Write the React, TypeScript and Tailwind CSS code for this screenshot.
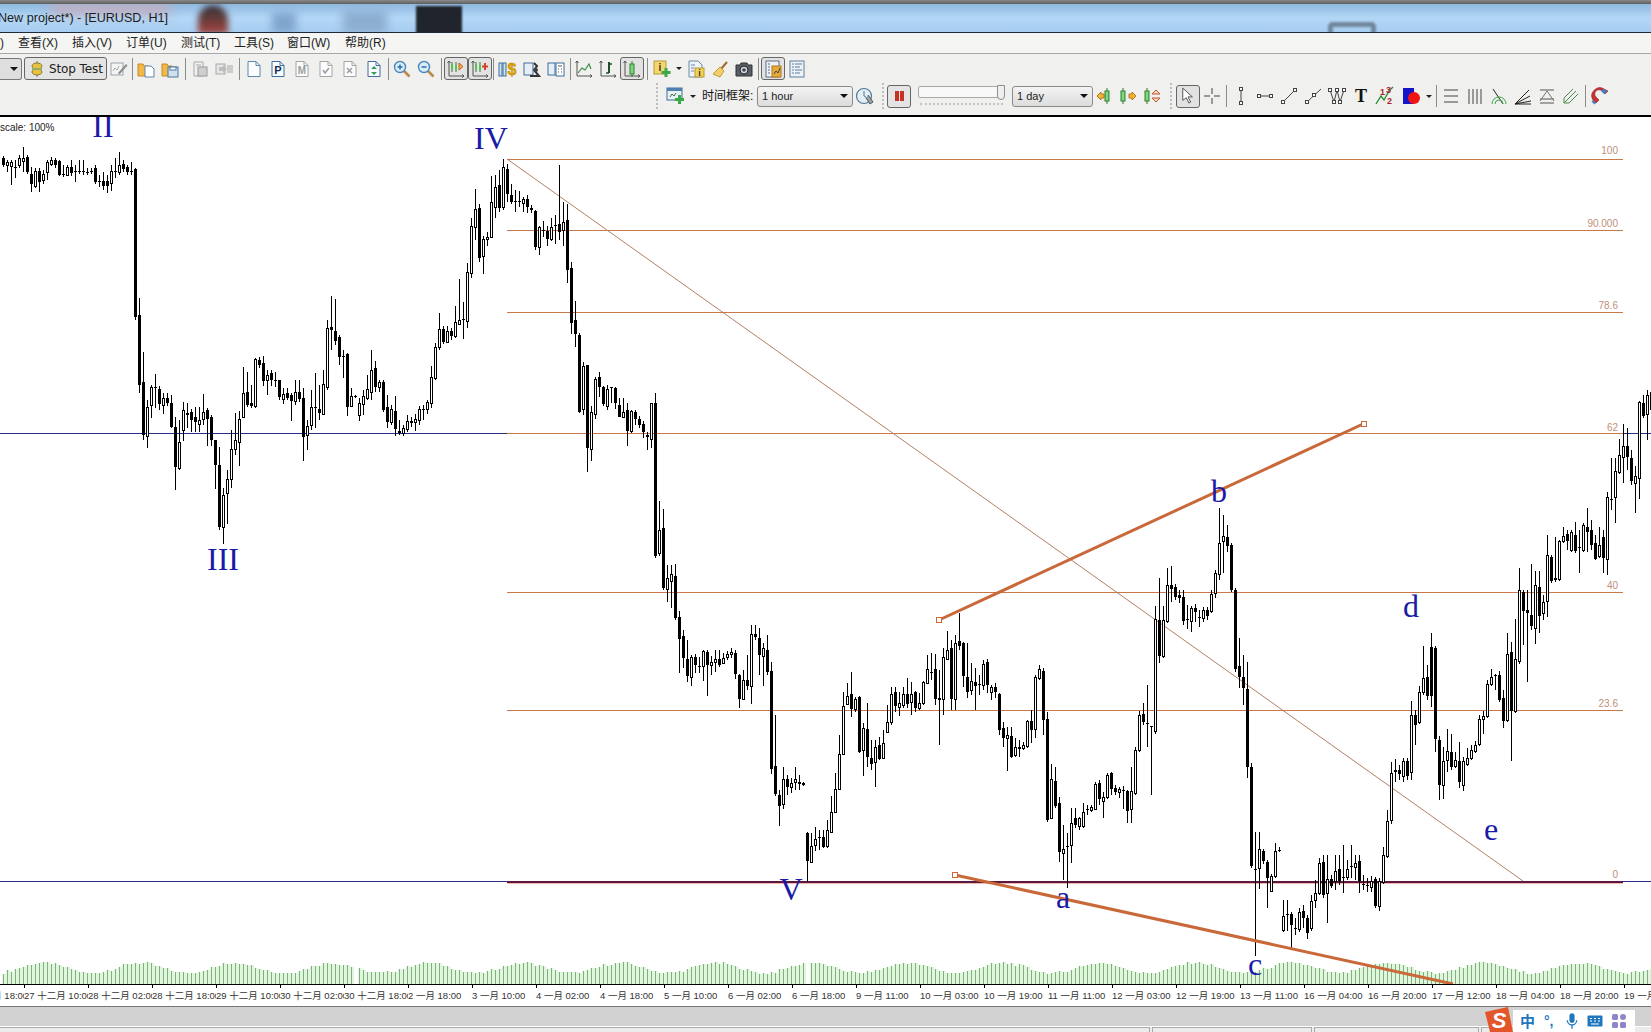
import { ReactNode } from 'react';

// y values are page pixels: body top-bottom, then wick top-bottom
const candleData = `k158-165:156-167 w162-165:160-172 w162-166:160-185 k167-168:160-178 w158-165:155-168 w158-161:147-172 k157-172:155-174 k174-184:167-192 w171-186:168-188 k171-182:168-192
w174-180:170-184 w162-172:160-180 w160-164:157-166 k160-165:158-168 k161-175:160-176 k174-175:165-177 w167-175:165-176 k167-173:160-176 k171-172:165-182 k171-172:160-174
k171-172:160-175 k172-173:168-175 k171-172:168-174 k168-182:165-184 k181-182:175-187 k181-186:172-190 k181-186:175-193 w171-183:165-191 k171-172:158-178 w165-172:152-175
k164-169:160-172 k167-172:165-175 k171-172:162-175 k169-317:168-320 k315-385:298-393 k382-435:352-440 w407-436:400-448 w387-405:385-418 k387-388:374-408 k389-404:386-410
w398-405:393-414 k398-403:393-406 k403-427:395-428 k427-467:417-490 w442-468:420-470 w410-430:402-441 k413-415:403-428 k412-420:409-432 k417-422:407-432 w420-424:407-432
w412-419:394-425 k410-419:408-446 k417-440:415-446 k440-465:440-489 k465-527:447-530 w495-527:488-544 w479-493:470-524 w449-479:430-488 w440-449:413-455 w419-442:411-466
w393-417:367-417 k392-405:372-407 k403-406:385-408 w359-406:358-408 k360-365:357-368 k363-381:356-386 w375-380:370-395 k373-380:370-386 k380-381:372-387 k380-397:381-400
w394-399:388-404 k393-398:388-400 k395-401:393-421 w392-401:380-405 k392-399:380-402 k398-437:388-461 w426-435:420-450 w407-425:390-430 k407-408:373-428 k409-413:385-420
w384-414:370-415 w328-387:320-390 k327-330:296-350 k331-341:299-345 k337-357:335-365 k356-357:350-378 k354-407:353-416 w396-406:388-407 k396-397:395-398 w403-415:398-421
w396-404:390-415 w389-398:375-400 w370-392:350-400 k368-387:361-392 w382-387:380-392 k382-410:380-412 k407-422:395-428 w409-422:405-425 k411-429:396-436 k431-433:420-435
w428-433:425-436 w421-429:415-432 k421-423:417-427 w419-422:414-431 w409-420:406-425 k409-410:405-420 w402-409:400-414 w377-403:366-408 w347-378:343-380 w329-347:313-350
k329-342:326-344 w331-342:326-343 k331-336:328-340 w322-336:306-338 w320-324:279-325 k319-320:302-339 w272-321:263-328 w226-273:218-278 w209-227:189-240 k208-258:204-262
w239-256:236-274 w237-239:232-246 w202-237:176-238 w187-207:175-218 k185-208:170-212 w167-207:159-210 k169-194:164-202
k195-202:184-204 k201-202:190-212 k201-202:191-207 w199-203:197-212 k199-207:195-213 k208-210:205-213 k211-247:210-250 w227-247:226-255 k230-231:221-237 k231-239:226-246
w227-239:218-241 k225-226:215-244 k224-232:165-240 w222-230:202-246 k220-270:204-283 k268-323:262-334 k320-334:301-347 k335-412:333-413 w366-409:362-415 k365-448:365-472
w412-449:406-461 w379-414:377-419 k377-387:372-397 k387-404:386-406 w389-406:385-410 k387-388:387-403 k388-403:387-409 k405-417:398-417 w412-417:398-418 k410-431:403-446
w411-431:410-433 k412-419:410-425 k419-425:416-428 k424-432:421-438 k435-437:432-450 w403-439:403-448 k403-556:393-558 w530-553:501-556 k528-588:509-590
w578-589:565-602 w574-581:565-608 k576-618:564-620 k617-639:611-673 k636-658:630-668 k659-676:640-682 w657-677:655-686 k657-665:654-673 k666-667:657-673 w651-666:650-681
k652-665:650-696 w662-665:656-675 w659-662:650-672 k659-665:650-667 w658-663:653-664 w654-657:651-660 w652-654:648-658 k653-674:650-679 k675-699:674-708 w680-699:670-700
k680-686:655-690 w634-686:625-704 k634-637:625-640 k638-655:628-675 w648-656:643-686 k650-672:635-675 k671-769:662-774 k766-794:715-796 k795-806:790-826 w779-804:767-809
k779-787:775-795 w783-787:778-793 w779-782:767-790 k782-784:775-790 k783-785:782-786 k833-861:832-882 w846-862:833-863 w839-845:827-851 k837-838:830-850 k837-847:830-848
w830-846:820-848 w812-832:796-833 w789-812:773-813 w754-789:735-790 w706-754:692-755 w696-704:683-705 k694-709:672-717 w699-709:697-712 k697-752:696-753 w728-750:723-776
k729-757:703-767 k758-764:740-770 w747-762:740-787 k745-759:737-760 w743-758:730-759 w722-732:705-733 w694-722:687-725 k692-706:687-712 w703-707:692-716 w694-705:687-708
k694-704:678-708 w694-702:682-715 k692-708:691-712 w703-708:693-710 w682-703:681-705 w669-683:655-684 k672-673:653-680 k669-699:654-705 k698-700:670-745 w657-699:648-715
w650-659:631-660 k648-699:640-710 w643-699:635-710 k641-646:613-650 k643-676:642-687 k677-692:643-698 w681-690:663-695 k682-686:668-710 k684-685:675-695 w664-685:660-690
k662-685:659-693 w687-692:685-700 k687-692:683-698 k694-730:693-735 k728-738:722-747 w735-738:727-771 k736-757:727-758 w747-755:738-757 k747-749:740-757 w745-748:742-750
w721-746:720-748 k721-730:710-743 w677-729:675-738 w669-678:665-680 k671-720:668-735 k719-820:712-822 w779-818:764-819 k781-806:767-808 k803-852:797-862 w849-853:825-880
k846-847:833-888 w823-845:808-863 k818-825:808-828 w818-826:817-830 w812-826:803-828 k809-810:805-815 w807-810:805-812
w784-809:782-810 k783-799:780-805 w797-801:792-818 w775-797:773-799 k773-789:772-795 k788-792:785-795 w789-792:787-798 k790-791:786-809 k791-811:790-823 w791-809:767-823
w750-793:747-795 w715-750:711-752 k714-722:703-725 k723-724:685-747 k726-727:726-795 w619-731:606-734 k620-656:578-663 w620-656:606-658 w585-621:568-623 k585-589:566-602
k587-597:584-600 k595-598:590-603 k597-621:590-625 k619-620:605-629 w608-621:606-632 k608-612:604-622 k617-618:610-627 w610-618:607-622 k610-616:607-620 w594-611:590-613
w573-593:570-598 w543-574:508-580 w536-541:515-573 k537-546:525-552 k545-590:543-592 k590-669:588-672 k666-677:638-688 k677-688:655-705 k689-767:662-778 k767-866:763-868
k869-870:832-956 w849-868:832-889 k851-861:849-864 k862-878:860-908 w876-891:874-892 w851-876:843-878 k850-851:847-852 w916-930:900-932 k914-915:900-931 k914-925:912-948
k928-929:918-935 w912-929:908-932 k911-918:905-928 k918-933:915-939 w901-928:895-931 w893-900:880-908 w863-893:858-895 k862-895:855-898 w879-893:855-923 k879-886:875-888
w871-881:855-890 k869-881:855-885 k877-878:845-893 w869-877:860-880 k866-867:845-878 w863-867:855-880 k861-881:855-893 k884-885:875-890 k885-886:878-892 w881-887:876-892
k879-906:877-908 w881-906:878-911 w855-882:847-884 w821-856:810-858 w773-820:762-824 k770-772:759-782 k770-774:765-780 w761-776:758-782 k761-776:758-780 w715-772:701-780
k715-725:710-745 w692-722:686-724 w678-692:646-695 k677-696:665-700 k647-696:633-707 k648-739:646-752 k740-785:736-800 w761-785:747-799 w751-760:729-772 k752-767:734-770
w760-766:752-768 k761-782:742-788 w761-785:757-791 w758-764:748-766 w750-758:745-760 w745-751:741-753 w719-744:715-746 w716-719:711-734 w684-716:680-718 w677-684:669-686
k675-676:674-690 k675-700:671-702 k698-721:690-728 w654-720:633-722 k652-711:642-761 w659-711:619-713 w590-661:568-664 k592-611:590-645 k610-613:590-682 k615-626:564-630
w585-628:571-644 k587-616:571-633 w602-613:595-620 w555-601:535-617 k557-581:555-583 k578-580:537-582 w541-579:540-581 w536-541:527-543 k534-541:530-550 w532-550:530-552
k535-551:522-553 k547-548:530-573 w525-550:523-552 k527-532:508-552 k530-545:520-550 k543-559:535-560 w545-556:527-558 k537-558:530-573 w497-559:492-575 k499-500:458-510
w471-497:458-523 w455-472:439-474 w446-457:424-483 k446-457:428-470 k458-481:450-485 w476-483:466-513 w402-478:401-499 k403-416:395-418 w395-414:390-440 k392-410:388-420`;

const candles = candleData.trim().split(/\s+/).map((tok, i) => {
  const m = tok.match(/^([kw])(\d+)-(\d+):(\d+)-(\d+)$/)!;
  return { x: 3 + i * 4, black: m[1] === 'k', top: +m[2], bot: +m[3], hi: +m[4], lo: +m[5] };
});

const volumes = Array.from({ length: 413 }, (_, i) => {
  const noise = Math.sin(i * 12.9898) * 43758.5453;
  const h = 16 + 5 * Math.sin((2 * Math.PI * i) / 24 - 1.05) + (noise - Math.floor(noise)) * 2.5 - 1.2;
  return { x: 3 + i * 4, h: i === 88 || i === 201 ? 0 : Math.round(h) };
});

const fibLines = [159, 230, 312, 433, 592, 710];
const fibLabels = [
  { t: '100', y: 154 },
  { t: '90.000', y: 227 },
  { t: '78.6', y: 309 },
  { t: '62', y: 431 },
  { t: '40', y: 589 },
  { t: '23.6', y: 707 },
  { t: '0', y: 878 },
];
const waveLabels = [
  { t: 'II', x: 103, y: 137 },
  { t: 'III', x: 223, y: 570 },
  { t: 'IV', x: 491, y: 149 },
  { t: 'V', x: 791, y: 900 },
  { t: 'a', x: 1063, y: 908 },
  { t: 'b', x: 1219, y: 502 },
  { t: 'c', x: 1255, y: 975 },
  { t: 'd', x: 1411, y: 617 },
  { t: 'e', x: 1491, y: 840 },
];
const axisLabels = [
  '26 十二月 18:00', '27 十二月 10:00', '28 十二月 02:00', '28 十二月 18:00', '29 十二月 10:00', '30 十二月 02:00', '30 十二月 18:00',
  '2 一月 18:00', '3 一月 10:00', '4 一月 02:00', '4 一月 18:00', '5 一月 10:00', '6 一月 02:00', '6 一月 18:00', '9 一月 11:00',
  '10 一月 03:00', '10 一月 19:00', '11 一月 11:00', '12 一月 03:00', '12 一月 19:00', '13 一月 11:00', '16 一月 04:00',
  '16 一月 20:00', '17 一月 12:00', '18 一月 04:00', '18 一月 20:00', '19 一月 12:00',
];

function Ico({ children }: { children: ReactNode }) {
  return (
    <svg viewBox="0 0 20 20" className="w-5 h-5 block" fill="none">
      {children}
    </svg>
  );
}

function Slot({ children, on }: { children?: ReactNode; on?: boolean }) {
  return (
    <div
      className={
        on
          ? 'w-[24px] h-[23px] flex-none flex items-center justify-center rounded-[3px] border border-[#666] bg-[#e2e2e2]'
          : 'w-[24px] h-[23px] flex-none flex items-center justify-center'
      }
    >
      {children}
    </div>
  );
}

function Sep({ w }: { w: string }) {
  return (
    <div className={`${w} h-[22px] flex-none flex justify-center`}>
      <div className="w-px h-full bg-[#8c8c8c]" />
    </div>
  );
}

function Grip() {
  return <div className="w-[4px] h-[26px] flex-none border-l-2 border-dotted border-[#bdbdbd]" />;
}

function Arrow() {
  return (
    <div className="w-[10px] flex-none flex justify-center">
      <div className="w-0 h-0 border-x-[3px] border-x-transparent border-t-[3px] border-t-[#222]" />
    </div>
  );
}

function Page({ stroke = '#5d86ad', children }: { stroke?: string; children?: ReactNode }) {
  return (
    <Ico>
      <path d="M4 2.5h8l4 4v11H4z" fill="#fbfcfe" stroke={stroke} />
      <path d="M12 2.5v4h4" stroke={stroke} />
      {children}
    </Ico>
  );
}

function Magnifier({ plus }: { plus?: boolean }) {
  return (
    <Ico>
      <path d="M11.5 11.5l6 6" stroke="#b98a4a" strokeWidth="2.6" />
      <circle cx="8" cy="8" r="5.5" fill="#d9ecfa" stroke="#4d86b8" strokeWidth="1.4" />
      <path d="M5.5 8h5" stroke="#2b6ea8" strokeWidth="1.5" />
      {plus && <path d="M8 5.5v5" stroke="#2b6ea8" strokeWidth="1.5" />}
    </Ico>
  );
}

function AxisIcon({ children }: { children: ReactNode }) {
  return (
    <Ico>
      <path d="M3 2v15h15" stroke="#555" />
      <path d="M1.5 4L3 2l1.5 2M16 15.5l2 1.5-2 1.5" stroke="#555" />
      {children}
    </Ico>
  );
}

function CandleMark({ x = 9, fill = '#7fd67f' }: { x?: number; fill?: string }) {
  return (
    <g>
      <path d={`M${x + 2} 2v16`} stroke="#2f7d2f" />
      <rect x={x} y="5" width="4" height="10" fill={fill} stroke="#2f7d2f" />
    </g>
  );
}

function DrawLine({ d }: { d: string }) {
  return (
    <Ico>
      <path d={d} stroke="#444" />
    </Ico>
  );
}

function Handles({ pts, line }: { pts: [number, number][]; line: string }) {
  return (
    <Ico>
      <path d={line} stroke="#444" />
      {pts.map(([x, y], i) => (
        <rect key={i} x={x - 1.5} y={y - 1.5} width="3" height="3" fill="#fff" stroke="#444" />
      ))}
    </Ico>
  );
}

function Select({ label, w }: { label: string; w: string }) {
  return (
    <div className={`${w} h-[21px] flex-none flex items-center justify-between px-[4px] rounded-[3px] border border-[#8a8a8a] bg-gradient-to-b from-[#f4f4f4] to-[#dcdcdc] text-[11px] text-[#222]`}>
      <span>{label}</span>
      <div className="w-0 h-0 border-x-[4px] border-x-transparent border-t-[4px] border-t-[#111]" />
    </div>
  );
}

function Chart() {
  const wicks = candles.map((c) => `M${c.x + 0.5} ${c.hi}V${c.lo}`).join('');
  const blacks = candles.filter((c) => c.black).map((c) => `M${c.x - 1} ${c.top}h3V${c.bot}h-3z`).join('');
  return (
    <svg viewBox="0 117 1651 867" className="absolute inset-0 w-full h-full block" shapeRendering="crispEdges">
      {/* volume */}
      <path d={volumes.map((v) => `M${v.x - 1.5} 984v${-v.h}h4v${v.h}z`).join('')} fill="#dff7da" />
      <path d={volumes.map((v) => `M${v.x + 0.5} 984v${-v.h}`).join('')} stroke="#84ad84" />

      {/* fibonacci levels */}
      <path d="M0 433.5H507M1623 433.5H1651M0 881.5H507M1623 881.5H1651" stroke="#2c2c86" />
      <path d={fibLines.map((y) => `M507 ${y}.5H1623`).join('')} stroke="#c9784c" />
      <path d="M507 883.5H1623" stroke="#f3b8b0" />
      <path d="M507 882H1623" stroke="#5c1840" strokeWidth="2" />
      <path d="M507 159L1523 881" stroke="#b57f66" shapeRendering="auto" />
      {fibLabels.map((l) => (
        <text key={l.t} x="1618" y={l.y} textAnchor="end" fill="#c08f78" className="font-['Liberation_Sans',sans-serif] text-[10px]">
          {l.t}
        </text>
      ))}

      {/* candles */}
      <path d={wicks} stroke="#000" />
      <path d={blacks} fill="#000" />
      {candles
        .filter((c) => !c.black)
        .map((c) => (
          <rect key={c.x} x={c.x - 0.5} y={c.top + 0.5} width="2" height={c.bot - c.top} fill="#fff" stroke="#000" />
        ))}

      {/* trend lines */}
      <path d="M939 620L1363 424" stroke="#c9693a" strokeWidth="3" shapeRendering="auto" />
      <path d="M955 875L1453 984" stroke="#c9693a" strokeWidth="3" shapeRendering="auto" />
      <rect x="936.5" y="617.5" width="5" height="5" fill="#fff" stroke="#c9693a" />
      <rect x="952.5" y="872.5" width="5" height="5" fill="#fff" stroke="#c9693a" />
      <rect x="1361.5" y="421.5" width="5" height="5" fill="#fff" stroke="#c9693a" />

      {waveLabels.map((l) => (
        <text
          key={l.t}
          x={l.x}
          y={l.y}
          textAnchor="middle"
          fill="#1a1aa6"
          shapeRendering="auto"
          className="font-['Liberation_Serif',serif] text-[32px]"
        >
          {l.t}
        </text>
      ))}
    </svg>
  );
}

export default function App() {
  return (
    <div className="w-[1651px] h-screen overflow-hidden flex flex-col bg-white font-['Liberation_Sans','Noto_Sans_CJK_SC',sans-serif]">
      <div className="h-[4px] flex-none bg-gradient-to-b from-[#8a8a8a] to-[#5e5e5e]" />

      {/* title bar */}
      <div className="relative h-[29px] flex-none flex items-center overflow-hidden border-b border-[#1d2a3a] bg-gradient-to-b from-[#8fb9e0] via-[#b3d7f6] to-[#a6cdf0]">
        <div className="absolute left-[50px] top-0 w-[120px] h-[10px] bg-[#c9a9b8] blur-[6px]" />
        <div className="absolute left-[198px] top-[1px] w-[30px] h-[29px] rounded-t-full bg-gradient-to-b from-[#2c3036] to-[#a8423c] blur-[3px]" />
        <div className="absolute left-[272px] top-[8px] w-[24px] h-[22px] bg-[#7fa5cf] blur-[4px]" />
        <div className="absolute left-[343px] top-[6px] w-[44px] h-[24px] bg-[#8caed0] blur-[5px]" />
        <div className="absolute left-[416px] top-[2px] w-[46px] h-[28px] bg-[#20242c] blur-[1px]" />
        <div className="absolute left-[1328px] top-[18px] w-[48px] h-[14px] rounded-t-[5px] border-[5px] border-b-0 border-[#71879e] blur-[1px]" />
        <span className="relative -ml-[2px] text-[12.6px] text-[#1c1c1c] whitespace-nowrap">New project*) - [EURUSD, H1]</span>
      </div>

      {/* menu bar */}
      <div className="h-[21px] flex-none flex items-center border-b border-[#a8a8a8] bg-[#f5f5f3] text-[12px] text-[#222] whitespace-nowrap">
        <span className="w-[18px]">)</span>
        <span className="w-[54px]">查看(X)</span>
        <span className="w-[54px]">插入(V)</span>
        <span className="w-[55px]">订单(U)</span>
        <span className="w-[53px]">测试(T)</span>
        <span className="w-[53px]">工具(S)</span>
        <span className="w-[58px]">窗口(W)</span>
        <span>帮助(R)</span>
      </div>

      {/* toolbars */}
      <div className="h-[61px] flex-none flex flex-col bg-[#f0f0ee]">
        <div className="h-[29px] flex-none flex items-center">
          <div className="w-[22px] h-[22px] flex-none flex items-center justify-end pr-[3px] rounded-r-[3px] border border-l-0 border-[#777] bg-[#dedede]">
            <div className="w-0 h-0 border-x-[4px] border-x-transparent border-t-[4px] border-t-[#111]" />
          </div>
          <div className="ml-[2px] w-[83px] h-[23px] flex-none flex items-center rounded-[3px] border border-[#666] bg-[#e4e4e4]">
            <div className="w-[24px] flex-none flex justify-center">
              <svg viewBox="0 0 12 16" className="w-[12px] h-[16px]">
                <path d="M6 0v16" stroke="#777" />
                <ellipse cx="6" cy="5" rx="5" ry="3" fill="#e8c23a" stroke="#8a7a30" />
                <ellipse cx="6" cy="11" rx="5" ry="3" fill="#e8c23a" stroke="#8a7a30" />
                <rect x="1" y="7" width="10" height="2" fill="#8fae6a" />
              </svg>
            </div>
            <span className="text-[12px] font-['DejaVu_Sans',sans-serif] tracking-[-0.1px] whitespace-nowrap text-[#222]">Stop Test</span>
          </div>
          <Slot>
            <Ico>
              <rect x="2" y="4" width="12" height="12" fill="#f4f4f4" stroke="#9aa4ad" />
              <path d="M4 12l2-3 2 2 2-4" stroke="#9ab09a" />
              <path d="M9 14l8-9 1.5 1.5-8 9z" fill="#8b8b8b" />
            </Ico>
          </Slot>
          <Sep w="w-[3px]" />
          <Slot>
            <Ico>
              <path d="M2 5h5l1 2h4v10H2z" fill="#f2b948" stroke="#c58a25" />
              <path d="M9 7h6l3 3v8H9z" fill="#fff" stroke="#5d86ad" />
            </Ico>
          </Slot>
          <Slot>
            <Ico>
              <path d="M2 5h5l1 2h4v10H2z" fill="#f2b948" stroke="#c58a25" />
              <rect x="8" y="8" width="10" height="10" fill="#cfe0ef" stroke="#4d76a0" />
              <rect x="10" y="8" width="6" height="3" fill="#fff" stroke="#4d76a0" />
            </Ico>
          </Slot>
          <Sep w="w-[6px]" />
          <Slot>
            <Ico>
              <path d="M4 3h9v14H4z" fill="#f0f0f0" stroke="#a8a8a8" />
              <rect x="8" y="8" width="9" height="9" fill="#cfcfcf" stroke="#9a9a9a" />
              <path d="M6 6h5" stroke="#a8a8a8" />
            </Ico>
          </Slot>
          <Slot>
            <Ico>
              <rect x="2" y="5" width="9" height="10" fill="#e6e6e6" stroke="#a8a8a8" />
              <path d="M5 8h4v-2l4 4-4 4v-2H5z" fill="#bdbdbd" />
              <path d="M14 6v8M16 6v8M18 6v8" stroke="#a8a8a8" />
            </Ico>
          </Slot>
          <Sep w="w-[6px]" />
          <Slot>
            <Page />
          </Slot>
          <Slot>
            <Page stroke="#3f6e9c">
              <text x="10" y="15" textAnchor="middle" fill="#0f2f5a" className="text-[11px] font-bold">P</text>
            </Page>
          </Slot>
          <Slot>
            <Page stroke="#a4a4a4">
              <text x="10" y="15" textAnchor="middle" fill="#9c9c9c" className="text-[10px] font-bold">M</text>
            </Page>
          </Slot>
          <Slot>
            <Page stroke="#a4a4a4">
              <path d="M7 11l2 3 4-5" stroke="#9c9c9c" strokeWidth="1.5" />
            </Page>
          </Slot>
          <Slot>
            <Page stroke="#a4a4a4">
              <path d="M7 9l5 5M12 9l-5 5" stroke="#9c9c9c" strokeWidth="1.5" />
            </Page>
          </Slot>
          <Slot>
            <Page stroke="#3f6e9c">
              <path d="M10 7l3 3H7zM10 16l3-3H7z" fill="#2f9d5b" />
            </Page>
          </Slot>
          <Sep w="w-[4px]" />
          <Slot>
            <Magnifier plus />
          </Slot>
          <Slot>
            <Magnifier />
          </Slot>
          <Sep w="w-[6px]" />
          <Slot on>
            <AxisIcon>
              <path d="M6 3v10M10 3v10" stroke="#2f7d2f" />
              <rect x="5" y="5" width="2" height="5" fill="#5cbf5c" />
              <rect x="9" y="6" width="2" height="5" fill="#5cbf5c" />
              <path d="M13 4l4 3.5-4 3.5z" fill="#f3b63a" stroke="#c05a2a" />
            </AxisIcon>
          </Slot>
          <Slot on>
            <AxisIcon>
              <path d="M6 3v10M10 3v10" stroke="#2f7d2f" />
              <rect x="5" y="5" width="2" height="5" fill="#5cbf5c" />
              <rect x="9" y="6" width="2" height="5" fill="#5cbf5c" />
              <path d="M15 4v7M12 7.5h6" stroke="#d8402a" strokeWidth="2" />
            </AxisIcon>
          </Slot>
          <Sep w="w-[2px]" />
          <div className="w-[2px] flex-none" />
          <Slot>
            <Ico>
              <rect x="1" y="4" width="3" height="13" fill="#cfe2ef" stroke="#3f6e9c" />
              <rect x="5" y="4" width="3" height="13" fill="#cfe2ef" stroke="#3f6e9c" />
              <text x="14" y="16" textAnchor="middle" fill="#e3a900" stroke="#b07a00" strokeWidth="0.4" className="text-[16px] font-bold">$</text>
            </Ico>
          </Slot>
          <Slot>
            <Ico>
              <rect x="2" y="4" width="9" height="12" fill="#e6eef5" stroke="#3f6e9c" />
              <path d="M12 4l3 3-3 4 5 6H8" stroke="#333" strokeWidth="2" />
              <circle cx="14" cy="11" r="2" fill="#444" />
            </Ico>
          </Slot>
          <Slot>
            <Ico>
              <rect x="2" y="4" width="7" height="12" fill="#e6eef5" stroke="#3f6e9c" />
              <rect x="10" y="4" width="8" height="13" fill="#fff" stroke="#3f6e9c" />
              <path d="M12 7h4M12 10h1M15 10h1M12 13h1M15 13h1" stroke="#555" />
            </Ico>
          </Slot>
          <Sep w="w-[4px]" />
          <Slot>
            <AxisIcon>
              <path d="M4 14l4-5 3 2 4-6 2 5" stroke="#3d8f4a" strokeWidth="1.2" />
            </AxisIcon>
          </Slot>
          <Slot>
            <AxisIcon>
              <path d="M11 3v11" stroke="#1f4f2a" strokeWidth="2" />
              <path d="M8 14h3M11 5h3" stroke="#1f4f2a" strokeWidth="1.5" />
            </AxisIcon>
          </Slot>
          <Slot on>
            <AxisIcon>
              <CandleMark x={8} />
            </AxisIcon>
          </Slot>
          <Sep w="w-[6px]" />
          <Slot>
            <Ico>
              <rect x="2" y="2" width="12" height="13" fill="#f4d76a" stroke="#b49a3a" />
              <text x="8" y="12" textAnchor="middle" fill="#333" className="text-[10px] font-bold">i</text>
              <path d="M14 9v9M9.5 13.5h9" stroke="#3fa648" strokeWidth="3" />
            </Ico>
          </Slot>
          <Arrow />
          <Slot>
            <Ico>
              <path d="M3 2h9l4 4v12H3z" fill="#edf3f8" stroke="#6d8ba6" />
              <rect x="9" y="9" width="9" height="9" fill="#f4d254" stroke="#b49a3a" />
              <text x="13.5" y="17" textAnchor="middle" fill="#333" className="text-[9px] font-bold">i</text>
              <path d="M5 6h4M5 9h3M5 12h3" stroke="#6d8ba6" />
            </Ico>
          </Slot>
          <Slot>
            <Ico>
              <path d="M17 3l-6 7" stroke="#a06a2a" strokeWidth="2" />
              <path d="M10 8l4 4-4 6-7-3z" fill="#f2cf6a" stroke="#c29a35" />
            </Ico>
          </Slot>
          <Slot>
            <Ico>
              <path d="M2 6h4l1-2h6l1 2h4v11H2z" fill="#555d66" stroke="#333" />
              <circle cx="10" cy="11" r="4" fill="#cfd6dc" stroke="#222" />
              <circle cx="10" cy="11" r="1.8" fill="#445" />
            </Ico>
          </Slot>
          <Sep w="w-[5px]" />
          <Slot on>
            <Ico>
              <rect x="3" y="2" width="13" height="16" fill="#edf2f6" stroke="#5d6f80" />
              <path d="M5 5h2M5 8h2M5 11h2M5 14h2" stroke="#5d6f80" />
              <rect x="9" y="7" width="9" height="11" fill="#e6a93a" stroke="#b5781f" />
              <path d="M11 15l2-3 2 2 2-5" stroke="#444" />
            </Ico>
          </Slot>
          <Slot>
            <Ico>
              <rect x="3" y="2" width="14" height="16" fill="#edf2f6" stroke="#5d7f9c" />
              <path d="M5 5h2M8 5h7M5 8h2M8 8h5M5 11h2M8 11h7M5 14h2M8 14h5" stroke="#5d7f9c" />
            </Ico>
          </Slot>
        </div>

        <div className="h-[26px] flex-none flex items-center pl-[656px]">
          <Grip />
          <div className="ml-[4px]">
            <Slot>
              <Ico>
                <rect x="1" y="2" width="15" height="12" fill="#e8f1f8" stroke="#3f6e9c" />
                <rect x="1" y="2" width="15" height="3" fill="#4d7fb0" />
                <path d="M4 11l2-3 2 2 2-3" stroke="#3d6d3d" />
                <path d="M13.5 9v9M9 13.5h9" stroke="#39a845" strokeWidth="3" />
              </Ico>
            </Slot>
          </div>
          <Arrow />
          <span className="ml-[4px] w-[51px] flex-none text-[12px] text-[#111] whitespace-nowrap">时间框架:</span>
          <div className="ml-[4px]">
            <Select label="1 hour" w="w-[96px]" />
          </div>
          <Slot>
            <Ico>
              <circle cx="9" cy="10" r="7.5" fill="#e4eef6" stroke="#4f7896" strokeWidth="1.2" />
              <path d="M9 5v5l3 2" stroke="#4f7896" />
              <path d="M13 9l5 7-3 2-4-6" fill="#9aa4ad" stroke="#555" />
            </Ico>
          </Slot>
          <div className="ml-[5px]">
            <Grip />
          </div>
          <div className="ml-[1px] w-[24px] h-[23px] flex-none flex items-center justify-center gap-[1px] rounded-[3px] border border-[#666] bg-[#e4e4e4]">
            <div className="w-[4px] h-[10px] bg-[#c8301f]" />
            <div className="w-[4px] h-[10px] bg-[#c8301f]" />
          </div>
          <div className="relative ml-[7px] w-[87px] h-[22px] flex-none">
            <div className="h-[12px] mt-[1px] rounded-[2px] border border-[#a8a8a8] bg-[#f8f8f8]" />
            <div className="absolute right-0 top-0 w-[8px] h-[15px] rounded-b-[4px] border border-[#8f8f8f] bg-[#efefef]" />
            <div className="mt-[4px] mx-[2px] h-[3px] border-b-2 border-dotted border-[#c4c4c4]" />
          </div>
          <div className="ml-[7px]">
            <Select label="1 day" w="w-[81px]" />
          </div>
          <div className="w-[2px] flex-none" />
          <div className="w-[20px] flex-none">
            <Ico>
              <path d="M6 6L2 10l4 4v-2h3V8H6z" fill="#f2b632" stroke="#b5761f" />
              <CandleMark x={10} />
            </Ico>
          </div>
          <div className="w-[2px] flex-none" />
          <Slot>
            <Ico>
              <CandleMark x={2} />
              <path d="M13 6l4 4-4 4v-2h-3V8h3z" fill="#f2b632" stroke="#b5761f" />
            </Ico>
          </Slot>
          <Slot>
            <Ico>
              <CandleMark x={2} />
              <path d="M13 4l-4 4h8zM13 16l-4-4h8z" fill="#f4dcc0" stroke="#c0552a" />
            </Ico>
          </Slot>
          <div className="ml-[5px]">
            <Grip />
          </div>
          <div className="ml-[2px]">
            <Slot on>
              <svg viewBox="0 0 16 20" className="w-[14px] h-[18px]">
                <path d="M2 1v14l4-3 3 6 2-1-3-6h5z" fill="#fff" stroke="#444" />
              </svg>
            </Slot>
          </div>
          <Slot>
            <DrawLine d="M10 2v6M10 12v6M2 10h6M12 10h6" />
          </Slot>
          <Sep w="w-[5px]" />
          <Slot>
            <Handles pts={[[10, 3], [10, 17]]} line="M10 3v14" />
          </Slot>
          <Slot>
            <Handles pts={[[4, 10], [16, 10]]} line="M4 10h12" />
          </Slot>
          <Slot>
            <Handles pts={[[4, 16], [16, 4]]} line="M4 16L16 4" />
          </Slot>
          <Slot>
            <Handles pts={[[4, 16], [11, 9]]} line="M4 16L18 3" />
          </Slot>
          <Slot>
            <Handles pts={[[3, 4], [10, 4], [17, 4], [7, 16], [13, 16]]} line="M3 4l4 12 3-12 3 12 4-12" />
          </Slot>
          <Slot>
            <span className="text-[18px] leading-none font-bold font-['Liberation_Serif',serif] text-[#111]">T</span>
          </Slot>
          <Slot>
            <Ico>
              <path d="M1 18l5-8 3 4 5-9 4-4" stroke="#2f8a3a" strokeWidth="1.4" />
              <text x="5" y="9" fill="#b02030" className="text-[9px] font-bold">1</text>
              <text x="11" y="7" fill="#b02030" className="text-[9px] font-bold">3</text>
              <text x="12" y="18" fill="#b02030" className="text-[9px] font-bold">2</text>
            </Ico>
          </Slot>
          <div className="w-[2px] flex-none" />
          <Slot>
            <Ico>
              <rect x="2" y="2" width="11" height="16" fill="#1414c8" />
              <circle cx="13" cy="12" r="6" fill="#f01414" />
            </Ico>
          </Slot>
          <div className="ml-[1px]">
            <Arrow />
          </div>
          <Sep w="w-[5px]" />
          <Slot>
            <DrawLine d="M3 4h14M3 10h14M3 16h14" />
          </Slot>
          <Slot>
            <DrawLine d="M4 3v15M8 3v15M12 3v15M16 3v15" />
          </Slot>
          <Slot>
            <Ico>
              <path d="M4 3l10 15" stroke="#222" />
              <path d="M3 18a7 7 0 0114 0M6 18a4 4 0 018 0" stroke="#3da548" />
            </Ico>
          </Slot>
          <Slot>
            <Ico>
              <path d="M2 18h16M2 18L16 4M2 18l15-8M2 18l16-3" stroke="#222" />
            </Ico>
          </Slot>
          <Slot>
            <Ico>
              <path d="M3 4h14M3 17h14M3 13h14" stroke="#555" />
              <path d="M3 15L10 5l7 10" stroke="#777" />
            </Ico>
          </Slot>
          <Slot>
            <Ico>
              <path d="M3 17L15 5M3 17h5l9-9M3 17v-5l9-9" stroke="#4b8a4b" />
            </Ico>
          </Slot>
          <Sep w="w-[4px]" />
          <Slot>
            <Ico>
              <path d="M15 3a8 8 0 00-11 11l3 3 3-3-3-3a4 4 0 016-6l3 3 3-3z" fill="#d03030" stroke="#802020" strokeWidth="0.6" />
              <path d="M15 3l3 2-3 3-3-3zM4 14l3 3-1.5 1.5-3-3z" fill="#3f7fc8" />
            </Ico>
          </Slot>
        </div>
      </div>

      {/* chart */}
      <div className="relative flex-1 min-h-0 border-t-2 border-black">
        <span className="absolute left-0 top-[3px] z-10 text-[10px] text-[#222]">scale: 100%</span>
        <Chart />
      </div>

      {/* time axis */}
      <div className="h-[22px] flex-none flex border-t border-black -ml-[40px]">
        {axisLabels.map((l) => (
          <div key={l} className="w-[64px] flex-none flex flex-col items-start overflow-hidden whitespace-nowrap text-[9.5px] leading-[11px] text-[#333]">
            <div className="w-px h-[3px] bg-black" />
            <span className="mt-[2px]">{l}</span>
          </div>
        ))}
      </div>

      {/* status bar */}
      <div className="h-[20px] flex-none border-t border-[#777] bg-[#d2d2d2]" />
      <div className="relative h-[6px] flex-none flex gap-[2px] border-t border-white bg-[#ececec]">
        <div className="w-[1150px] border-t border-r border-[#aaa]" />
        <div className="w-[160px] border-t border-x border-[#aaa]" />
        <div className="w-[165px] border-t border-x border-[#aaa]" />
        <div className="w-[100px] border-t border-x border-[#aaa]" />
      </div>

      {/* input method bar */}
      <div className="absolute left-[1483px] top-[1007px] h-[25px] flex items-center">
        <svg viewBox="0 0 30 25" className="w-[30px] h-[25px] block">
          <path d="M2 5L25 0l5 25H7z" fill="#e2562a" />
          <text x="16" y="21" textAnchor="middle" fill="#fff" className="text-[22px] font-bold italic">S</text>
        </svg>
        <div className="mt-[3px] w-[122px] h-[22px] flex items-center bg-white text-[#1f78bd]">
          <span className="ml-[7px] text-[15px] font-bold leading-none">中</span>
          <span className="ml-[9px] text-[14px] font-bold leading-none">°,</span>
          <svg viewBox="0 0 14 20" className="ml-[12px] w-[12px] h-[18px]">
            <rect x="4" y="1" width="6" height="11" rx="3" fill="#1f78bd" />
            <path d="M1.5 9a5.5 5.5 0 0011 0M7 15v4" stroke="#1f78bd" strokeWidth="1.5" fill="none" />
          </svg>
          <svg viewBox="0 0 16 12" className="ml-[9px] w-[16px] h-[12px]">
            <rect x="0.5" y="0.5" width="15" height="11" rx="1" fill="#1f78bd" />
            <path d="M3 3.5h2M7 3.5h2M11 3.5h2M3 6h2M7 6h2M11 6h2M4 9h8" stroke="#fff" />
          </svg>
          <svg viewBox="0 0 14 14" className="ml-[9px] w-[14px] h-[14px]">
            <rect x="0" y="0" width="6" height="6" rx="1.5" fill="#8f86c9" />
            <circle cx="11" cy="3" r="3" fill="#8f86c9" />
            <rect x="0" y="8" width="6" height="6" rx="1.5" fill="#8f86c9" />
            <rect x="8" y="8" width="6" height="6" rx="1.5" fill="#8f86c9" />
          </svg>
        </div>
      </div>
    </div>
  );
}
